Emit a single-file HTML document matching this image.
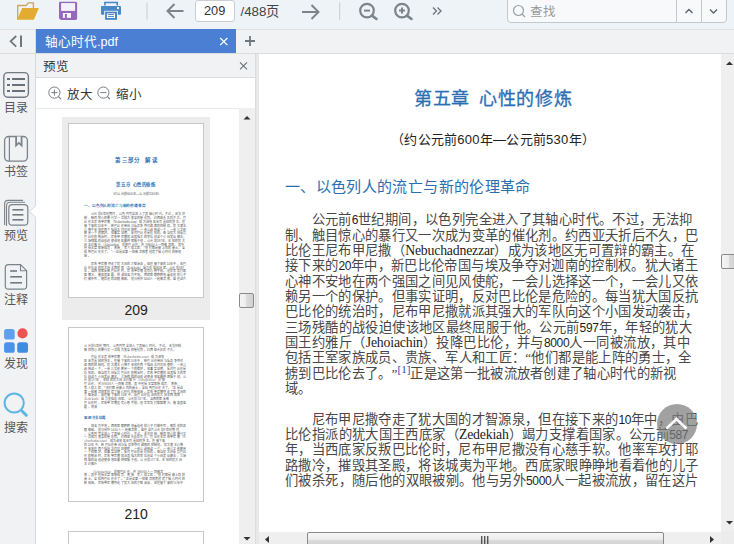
<!DOCTYPE html>
<html lang="zh-CN">
<head>
<meta charset="utf-8">
<style>
*{box-sizing:border-box;margin:0;padding:0}
html,body{width:734px;height:544px;overflow:hidden;background:#fff}
body{position:relative;font-family:"Liberation Sans",sans-serif;color:#333}
.a{position:absolute}
#toolbar{left:0;top:0;width:734px;height:30px;background:#eef3f8;border-bottom:1px solid #dde2e7}
#tabbar{left:0;top:30px;width:734px;height:24px;background:#f1f2f4;border-bottom:1px solid #dadcdf}
#side{left:0;top:54px;width:36px;height:490px;background:#f1f2f4;border-right:1px solid #d6d8db}
#prev{left:36px;top:54px;width:219px;height:490px;background:#fff}
#split{left:255px;top:54px;width:4px;height:490px;background:#e8e8e8;border-left:1px solid #dcdcdc}
#doc{left:259px;top:54px;width:462px;height:478px;background:#fff;overflow:hidden}
.ln{position:absolute;white-space:nowrap;text-spacing-trim:space-all;font-kerning:none;font-family:"Liberation Serif",serif;font-size:13.3px;line-height:16px;color:#484848}
.ln .dg{font-family:"Liberation Sans",sans-serif;font-size:12px;letter-spacing:-0.35px;color:#1c1c1c}
.ln .lt{font-size:13.8px;letter-spacing:-0.2px;color:#1c1c1c}
.tin .ln .dg{letter-spacing:0}
.ln sup{font-size:11px;line-height:11px;color:#2b3fb5;vertical-align:top;position:relative;top:-2px;letter-spacing:0}
.tt{position:absolute;white-space:nowrap;font-size:18px;line-height:20px;color:#2a6fb2;letter-spacing:0.7px;-webkit-text-stroke:0.3px #2a6fb2}
.st{position:absolute;white-space:nowrap;font-size:13px;line-height:16px;color:#222;letter-spacing:0.26px;text-spacing-trim:space-all}
.hd{position:absolute;white-space:nowrap;font-size:15px;line-height:18px;color:#2a6fb2;letter-spacing:0.38px;text-spacing-trim:space-all}
.lbl{position:absolute;font-size:12px;line-height:14px;color:#555;white-space:nowrap}
.sl{position:absolute;font-size:12px;line-height:14px;color:#555;white-space:nowrap;left:3px;width:25.4px;text-align:center}
.thumb{position:absolute;width:136px;height:175px;background:#fff;border:1px solid #c8c8c8;overflow:hidden}
.tin{position:absolute;left:-69px;transform-origin:0 0}
.tin .tt,.tin .hd{font-weight:bold}
.tin .st{color:#555}
.tin .tt{-webkit-text-stroke:0}
.tin .ln{font-size:12px;letter-spacing:1.27px !important;color:#505050}
.tin .ln .dg,.tin .ln .lt{color:#505050}
.sb{position:absolute;background:#efefef}
</style>
</head>
<body>
<!-- toolbar -->
<div id="toolbar" class="a">
  <svg class="a" style="left:0;top:0" width="734" height="29" viewBox="0 0 734 29">
    <path d="M17.7 19.4 V5.5 H26.3 L28.2 2.8 H33.4 V8.4" fill="none" stroke="#c9a55e" stroke-width="1.3" stroke-linejoin="round"/>
    <path d="M17.2 19.7 L22.1 8.1 H38.9 L33.8 19.7 Z" fill="#e2ac33"/>
    <path d="M60 1.8 H75.6 Q77.1 1.8 77.1 3.3 V18.6 Q77.1 20 75.6 20 H60.8 L59 18.2 V2.8 Q59 1.8 60 1.8 Z" fill="#9568bb"/>
    <rect x="61.1" y="3.1" width="14" height="7.8" fill="#f3f2fa"/>
    <rect x="62.9" y="13" width="8.1" height="4.9" fill="#f6f4fb"/>
    <rect x="64.9" y="14" width="2" height="3.9" fill="#9568bb"/>
    <path d="M104.9 5.5 V2.5 H117.2 V5.5" fill="none" stroke="#4a86c5" stroke-width="1.6"/>
    <rect x="101" y="5.9" width="20" height="8.9" rx="0.8" fill="#4a88c8"/>
    <rect x="104.2" y="10.8" width="13.7" height="9.6" fill="#eef3f8"/>
    <rect x="105.1" y="11.7" width="11.9" height="8.1" fill="#4a86c5"/>
    <rect x="106.9" y="13.4" width="8.1" height="4.6" fill="#fff"/>
    <rect x="107.9" y="14" width="6.1" height="0.9" fill="#4a86c5"/>
    <rect x="107.9" y="16" width="6.1" height="0.9" fill="#4a86c5"/>
    <rect x="117" y="7.1" width="2" height="2" fill="#fff"/>
    <rect x="146.5" y="2.5" width="1" height="17" fill="#c9cdd2"/>
    <rect x="339.2" y="2.2" width="1" height="17.4" fill="#c9cdd2"/>
    <path d="M183.5 11 H168 M174.5 4 L167.5 11 L174.5 18" fill="none" stroke="#7c848b" stroke-width="2"/>
    <path d="M302 12 H318 M311.5 5 L318.5 12 L311.5 19" fill="none" stroke="#7c848b" stroke-width="2"/>
    <circle cx="367" cy="10.6" r="6.8" fill="none" stroke="#7c848b" stroke-width="2.2"/>
    <path d="M372 15.6 L376.5 19" stroke="#7c848b" stroke-width="2.6" stroke-linecap="round"/>
    <path d="M364 10.6 H370" stroke="#7c848b" stroke-width="2"/>
    <circle cx="402" cy="10.6" r="6.8" fill="none" stroke="#7c848b" stroke-width="2.2"/>
    <path d="M407 15.6 L411.5 19" stroke="#7c848b" stroke-width="2.6" stroke-linecap="round"/>
    <path d="M399 10.6 H405 M402 7.6 V13.6" stroke="#7c848b" stroke-width="2"/>
    <path d="M433 7.5 L436.5 11 L433 14.5 M437.5 7.5 L441 11 L437.5 14.5" fill="none" stroke="#6c747b" stroke-width="1.3"/>
  </svg>
  <div class="a" style="left:195px;top:0;width:40px;height:22px;background:#fff;border:1px solid #c9ced3;border-radius:3px"></div>
  <div class="lbl" style="left:204px;top:4px;font-size:12.8px;color:#333">209</div>
  <div class="lbl" style="left:240.5px;top:4.5px;font-size:13.3px;color:#444">/488页</div>
  <div class="a" style="left:507px;top:-3px;width:220px;height:26px;background:#f7f9fb;border:1px solid #c3c8cd;border-radius:4px"></div>
  <div class="a" style="left:676px;top:0;width:1px;height:22px;background:#c3c8cd"></div>
  <div class="a" style="left:701px;top:0;width:1px;height:22px;background:#c3c8cd"></div>
  <svg class="a" style="left:0;top:0" width="734" height="29">
    <circle cx="518.5" cy="10.5" r="5" fill="none" stroke="#9aa1a8" stroke-width="1.2"/>
    <path d="M522 14 L525 17" stroke="#9aa1a8" stroke-width="1.3"/>
    <path d="M685.5 13 L689 9.5 L692.5 13" fill="none" stroke="#5a6168" stroke-width="1.3"/>
    <path d="M710 9.5 L713.5 13 L717 9.5" fill="none" stroke="#5a6168" stroke-width="1.3"/>
  </svg>
  <div class="lbl" style="left:530px;top:4.5px;font-size:12.5px;color:#999">查找</div>
</div>

<!-- tab bar -->
<div id="tabbar" class="a">
  <svg class="a" style="left:0;top:0" width="36" height="24">
    <path d="M16.2 6 L10.6 11.3 L16.2 16.6" fill="none" stroke="#6f777e" stroke-width="1.8"/>
    <rect x="20" y="5.5" width="2" height="11.5" fill="#6f777e"/>
  </svg>
  <div class="a" style="left:35px;top:0;width:1px;height:24px;background:#dadcdf"></div>
  <div class="a" style="left:36px;top:-1px;width:200px;height:24px;background:#4a7fd4"></div>
  <div class="lbl" style="left:45px;top:4.8px;font-size:12.6px;color:#fff">轴心时代.pdf</div>
  <svg class="a" style="left:0;top:0" width="734" height="24">
    <path d="M220.2 8 L227.4 15.2 M227.4 8 L220.2 15.2" stroke="#fff" stroke-width="1.2"/>
    <path d="M245 11 H255 M250 6 V16" stroke="#6f777e" stroke-width="1.8"/>
  </svg>
</div>

<!-- left sidebar -->
<div id="side" class="a">
  <svg class="a" style="left:0;top:0" width="36" height="490" viewBox="0 54 36 490">
    <!-- 目录 -->
    <rect x="3.8" y="72.6" width="24.6" height="24.6" rx="4" fill="none" stroke="#737a81" stroke-width="1.4"/>
    <g fill="#6a7178"><rect x="7" y="78" width="3" height="2"/><rect x="12" y="78" width="13" height="2"/>
    <rect x="7" y="84" width="3" height="2"/><rect x="12" y="84" width="13" height="2"/>
    <rect x="7" y="90" width="3" height="2"/><rect x="12" y="90" width="13" height="2"/></g>
    <!-- 书签 -->
    <rect x="4.6" y="136.5" width="22.8" height="24.6" rx="4" fill="none" stroke="#7c838a" stroke-width="1.3"/>
    <rect x="8.8" y="136.5" width="1.2" height="24.6" fill="#7c838a"/>
    <path d="M15.2 136.5 H22.5 V147.5 L18.85 144 L15.2 147.5 Z" fill="#7c838a"/>
    <path d="M17 136.5 H20.7 V143.5 L18.85 141.7 L17 143.5 Z" fill="#f1f2f4"/>
    <!-- 预览 -->
    <path d="M4.6 225 V204 Q4.6 200.4 8.2 200.4 H23" fill="none" stroke="#7c838a" stroke-width="1.1"/>
    <path d="M6.5 226 V206 Q6.5 202.3 10 202.3 H25" fill="none" stroke="#7c838a" stroke-width="1.1"/>
    <rect x="8.8" y="204.6" width="19" height="20.6" rx="3.5" fill="#f1f2f4" stroke="#7c838a" stroke-width="1.2"/>
    <g fill="#727980"><rect x="12.4" y="209" width="11" height="1.6"/><rect x="12.4" y="214" width="11" height="1.6"/><rect x="12.4" y="219" width="11" height="1.6"/></g>
    <!-- 注释 -->
    <path d="M8.5 264.6 H20.5 L26.6 270.7 V286 Q26.6 289.2 23.4 289.2 H8.5 Q5.3 289.2 5.3 286 V267.8 Q5.3 264.6 8.5 264.6 Z" fill="none" stroke="#7c838a" stroke-width="1.2"/>
    <path d="M20.5 264.6 V270.7 H26.6" fill="none" stroke="#7c838a" stroke-width="1.1"/>
    <g fill="#727980"><rect x="10.2" y="270.2" width="6.8" height="1.6"/><rect x="10.2" y="276" width="11.8" height="1.6"/><rect x="10.2" y="282" width="11.8" height="1.6"/></g>
    <!-- 发现 -->
    <rect x="4.1" y="329" width="10.6" height="10.6" rx="2.6" fill="#5e9ff0"/>
    <circle cx="22.5" cy="333.4" r="5.1" fill="#f05252"/>
    <rect x="4.1" y="342.2" width="10.6" height="10.6" rx="2.6" fill="#4a92ea"/>
    <rect x="17.2" y="342.2" width="10.8" height="10.6" rx="2.6" fill="#3f8de2"/>
    <!-- 搜索 -->
    <circle cx="14.2" cy="403" r="9.6" fill="none" stroke="#5cb5e5" stroke-width="2"/>
    <path d="M22.2 411.2 L26.3 415.3" stroke="#5cb5e5" stroke-width="3" stroke-linecap="round"/>
  </svg>
  <div class="sl" style="top:46.5px">目录</div>
  <div class="sl" style="top:110.5px">书签</div>
  <div class="sl" style="top:174.5px">预览</div>
  <div class="sl" style="top:238.5px">注释</div>
  <div class="sl" style="top:302.5px">发现</div>
  <div class="sl" style="top:366.5px">搜索</div>
</div>
<svg class="a" style="left:0;top:0" width="40" height="544">
  <path d="M36 205.6 L29.6 211.6 L36 217.6" fill="#fff" stroke="#d6d8db" stroke-width="1"/>
</svg>

<!-- preview panel -->
<div id="prev" class="a">
  <div class="a" style="left:0;top:0;width:219px;height:24px;background:#f1f2f4;border-bottom:1px solid #d9dbde"></div>
  <div class="lbl" style="left:6.5px;top:5.5px;font-size:12.5px;color:#333">预览</div>
  <svg class="a" style="left:0;top:0" width="219" height="60">
    <path d="M204 8.4 L211 15.4 M211 8.4 L204 15.4" stroke="#6b7278" stroke-width="1.1"/>
    <circle cx="18.4" cy="38.6" r="5.6" fill="none" stroke="#757c83" stroke-width="1"/>
    <path d="M15.4 38.6 H21.4 M18.4 35.6 V41.6" stroke="#757c83" stroke-width="1"/>
    <path d="M22.4 42.6 L25 45.2" stroke="#757c83" stroke-width="1.2"/>
    <circle cx="67.4" cy="38.6" r="5.6" fill="none" stroke="#757c83" stroke-width="1"/>
    <path d="M64.4 38.6 H70.4" stroke="#757c83" stroke-width="1"/>
    <path d="M71.4 42.6 L74 45.2" stroke="#757c83" stroke-width="1.2"/>
  </svg>
  <div class="lbl" style="left:30.5px;top:33.5px;font-size:12.5px;color:#333">放大</div>
  <div class="lbl" style="left:79.5px;top:33.5px;font-size:12.5px;color:#333">缩小</div>
  <div class="a" style="left:0;top:54px;width:219px;height:1px;background:#e9eaec"></div>
</div>
<!-- selected thumb bg -->
<div class="a" style="left:62px;top:117px;width:148px;height:203px;background:#ececec"></div>
<div class="thumb" style="left:68px;top:123px">
  <div class="tin" style="top:-124px;transform:translate(13.77px,159.68px) scale(0.248)">
    <div class="ln" style="left:311.6px;top:212.30px;letter-spacing:0.3827px">公元前<span class="dg">6</span>世纪期间，以色列完全进入了其轴心时代。不过，无法抑</div>
<div class="ln" style="left:285px;top:227.63px;letter-spacing:0.3335px">制、触目惊心的暴行又一次成为变革的催化剂。约西亚夭折后不久，巴</div>
<div class="ln" style="left:285px;top:242.96px;letter-spacing:0.3471px">比伦王尼布甲尼撒（<span class="lt">Nebuchadnezzar</span>）成为该地区无可置辩的霸主。在</div>
<div class="ln" style="left:285px;top:258.29px;letter-spacing:0.3473px">接下来的<span class="dg">20</span>年中，新巴比伦帝国与埃及争夺对迦南的控制权。犹大诸王</div>
<div class="ln" style="left:285px;top:273.62px;letter-spacing:0.3335px">心神不安地在两个强国之间见风使舵，一会儿选择这一个，一会儿又依</div>
<div class="ln" style="left:285px;top:288.95px;letter-spacing:0.3335px">赖另一个的保护。但事实证明，反对巴比伦是危险的。每当犹大国反抗</div>
<div class="ln" style="left:285px;top:304.28px;letter-spacing:0.3374px">巴比伦的统治时，尼布甲尼撒就派其强大的军队向这个小国发动袭击，</div>
<div class="ln" style="left:285px;top:319.61px;letter-spacing:0.3891px">三场残酷的战役迫使该地区最终屈服于他。公元前<span class="dg">597</span>年，年轻的犹大</div>
<div class="ln" style="left:285px;top:334.94px;letter-spacing:0.4605px">国王约雅斤（<span class="lt">Jehoiachin</span>）投降巴比伦，并与<span class="dg">8000</span>人一同被流放，其中</div>
<div class="ln" style="left:285px;top:350.27px;letter-spacing:0.347px">包括王室家族成员、贵族、军人和工匠：“他们都是能上阵的勇士，全</div>
<div class="ln" style="left:285px;top:365.60px;letter-spacing:0.3005px">掳到巴比伦去了。”<sup>[1]</sup>正是这第一批被流放者创建了轴心时代的新视</div>
<div class="ln" style="left:285px;top:380.93px;letter-spacing:0.347px">域。</div>
<div class="ln" style="left:311.6px;top:411.59px;letter-spacing:0.3433px">尼布甲尼撒夺走了犹大国的才智源泉，但在接下来的<span class="dg">10</span>年中，由巴</div>
<div class="ln" style="left:285px;top:426.92px;letter-spacing:0.3788px">比伦指派的犹大国王西底家（<span class="lt">Zedekiah</span>）竭力支撑着国家。公元前<span class="dg">587</span></div>
<div class="ln" style="left:285px;top:442.25px;letter-spacing:0.3272px">年，当西底家反叛巴比伦时，尼布甲尼撒没有心慈手软。他率军攻打耶</div>
<div class="ln" style="left:285px;top:457.58px;letter-spacing:0.347px">路撒冷，摧毁其圣殿，将该城夷为平地。西底家眼睁睁地看着他的儿子</div>
<div class="ln" style="left:285px;top:472.91px;letter-spacing:0.3912px">们被杀死，随后他的双眼被剜。他与另外<span class="dg">5000</span>人一起被流放，留在这片</div>
<div class="tt" style="left:414px;top:89px">第五章</div>
<div class="tt" style="left:479px;top:89px">心性的修炼</div>
<div class="st" style="left:391px;top:132px">（约公元前600年—公元前530年）</div>
<div class="hd" style="left:284.8px;top:177.8px">一、以色列人的流亡与新的伦理革命</div>
    <div class="tt" style="left:409px;top:-8px;font-size:22px;line-height:24px;font-weight:bold;letter-spacing:3.6px">第三部分&nbsp;&nbsp;解读</div>
  </div>
</div>
<div class="lbl" style="left:124.5px;top:303px;font-size:14px;color:#222">209</div>
<div class="thumb" style="left:68px;top:327px">
  <div class="tin" style="top:-328px;transform:translate(13.77px,363.68px) scale(0.248)">
    <div class="ln" style="left:285px;top:-78.97px;letter-spacing:0.347px">公元前6世纪期间，以色列完全进入了其轴心时代。不过，无法抑制、</div>
<div class="ln" style="left:285px;top:-63.64px;letter-spacing:0.347px">触目惊心的暴行又一次成为变革的催化剂。约西亚夭折后不久，</div>
<div class="ln" style="left:311.6px;top:-32.98px;letter-spacing:0.347px">巴比伦王尼布甲尼撒（Nebuchadnezzar）成为该地</div>
<div class="ln" style="left:285px;top:-17.65px;letter-spacing:0.347px">区无可置辩的霸主。在接下来的20年中，新巴比伦帝国与埃及争夺对</div>
<div class="ln" style="left:285px;top:-2.32px;letter-spacing:0.347px">迦南的控制权。犹大诸王心神不安地在两个强国之间见风使舵，一会儿</div>
<div class="ln" style="left:285px;top:13.01px;letter-spacing:0.347px">选择这一个，一会儿又依赖另一个的保护。但事实证明，反对巴比伦是</div>
<div class="ln" style="left:285px;top:28.34px;letter-spacing:0.347px">危险的。每当犹大国反抗巴比伦的统治时，尼布甲尼撒就派其强大的军</div>
<div class="ln" style="left:285px;top:43.67px;letter-spacing:0.347px">队向这个小国发动袭击，三场残酷的战役迫使该地区最终屈服于他。公</div>
<div class="ln" style="left:285px;top:59.00px;letter-spacing:0.347px">元前597年，年轻的犹大国王约雅斤（Jehoiachin）投降</div>
<div class="ln" style="left:285px;top:74.33px;letter-spacing:0.347px">巴比伦，并与8000人一同被流放，其中包括王室家族成员、贵族、</div>
<div class="ln" style="left:285px;top:89.66px;letter-spacing:0.347px">军人和工匠：“他们都是能上阵的勇士，全掳到巴比伦去了。”正是这</div>
<div class="ln" style="left:285px;top:104.99px;letter-spacing:0.347px">第一批被流放者创建了轴心时代的新视域。尼布甲尼撒夺走了犹大国的</div>
<div class="ln" style="left:285px;top:120.32px;letter-spacing:0.347px">才智源泉，但在接下来的10年中，由巴比伦指派的犹大国王西底家（</div>
<div class="ln" style="left:285px;top:135.65px;letter-spacing:0.347px">Zedekiah）竭力支撑着国家。公元前587年，当西底家反叛</div>
<div class="ln" style="left:285px;top:150.98px;letter-spacing:0.347px">巴比伦时，尼布甲尼撒没有心慈手软。他率军攻打耶路撒冷，摧毁其圣</div>
<div class="ln" style="left:285px;top:166.31px;letter-spacing:0.347px">殿，将该</div>
<div class="ln" style="left:311.6px;top:242.96px;letter-spacing:0.347px">城夷为平地。西底家眼睁睁地看着他的儿子们被杀死，随后他的双</div>
<div class="ln" style="left:285px;top:258.29px;letter-spacing:0.347px">眼被剜。他与另外5000人一起被流放，留在这片公元前6世纪期间</div>
<div class="ln" style="left:285px;top:273.62px;letter-spacing:0.347px">，以色列完全进入了其轴心时代。不过，无法抑制、触目惊心的暴行又</div>
<div class="ln" style="left:285px;top:288.95px;letter-spacing:0.347px">一次成为变革的催化剂。约西亚夭折后不久，巴比伦王尼布甲尼撒（N</div>
<div class="ln" style="left:285px;top:304.28px;letter-spacing:0.347px">ebuchadnezzar）成为该地区无可置辩的霸主。在接下来</div>
<div class="ln" style="left:285px;top:319.61px;letter-spacing:0.347px">的20年中，新巴比伦帝国与埃及争夺对迦南的控制权。犹大诸王心神</div>
<div class="ln" style="left:285px;top:334.94px;letter-spacing:0.347px">不安地在两个强国之间见风使舵，一会儿选择这一个，一会儿又依赖另</div>
<div class="ln" style="left:285px;top:350.27px;letter-spacing:0.347px">一个的保护。但事实证明，反对巴比伦是危险的。每当犹大国反抗巴比</div>
<div class="ln" style="left:285px;top:365.60px;letter-spacing:0.347px">伦的统治时，尼布甲尼撒就派其强大的军队向这个小国发动袭击，三场</div>
<div class="ln" style="left:285px;top:380.93px;letter-spacing:0.347px">残酷的战役迫使该地区最终屈服于他。公元前597年，年轻的犹大国</div>
<div class="ln" style="left:285px;top:396.26px;letter-spacing:0.347px">王约雅斤</div>
<div class="ln" style="left:311.6px;top:426.92px;letter-spacing:0.347px">（Jehoiachin）投降巴比伦，并与8000人一同被流</div>
<div class="ln" style="left:285px;top:442.25px;letter-spacing:0.347px">放，其中包括王室家族成员、贵族、军人和工匠：“他们都是能上阵的</div>
<div class="ln" style="left:285px;top:457.58px;letter-spacing:0.347px">勇士，全掳到巴比伦去了。”正是这第一批被流放者创建了轴心时代的</div>
<div class="ln" style="left:285px;top:472.91px;letter-spacing:0.347px">新视域。尼布甲尼撒夺走了犹大国的才智源泉，但在接下来的10年中</div>
<div class="hd" style="left:284.8px;top:210.30px;font-size:14px">驱逐并非结局</div>
  </div>
</div>
<div class="lbl" style="left:124.5px;top:507px;font-size:14px;color:#222">210</div>
<div class="thumb" style="left:68px;top:531px"></div>

<!-- preview scrollbar -->
<div class="sb" style="left:239px;top:108px;width:16px;height:436px"></div>
<svg class="a" style="left:239px;top:108px" width="16" height="436">
  <defs><linearGradient id="gv" x1="0" y1="0" x2="1" y2="0"><stop offset="0" stop-color="#f6f6f6"/><stop offset="0.5" stop-color="#ececec"/><stop offset="0.5" stop-color="#dcdcdc"/><stop offset="1" stop-color="#d0d0d0"/></linearGradient>
  <linearGradient id="gh" x1="0" y1="0" x2="0" y2="1"><stop offset="0" stop-color="#f6f6f6"/><stop offset="0.5" stop-color="#ececec"/><stop offset="0.5" stop-color="#dcdcdc"/><stop offset="1" stop-color="#d0d0d0"/></linearGradient></defs>
  <path d="M4.5 11.5 L8 8 L11.5 11.5 Z" fill="#333"/>
  <rect x="0.5" y="185.5" width="14" height="14" rx="1.5" fill="url(#gv)" stroke="#8a8a8a"/>
  <path d="M4.5 429 L8 432.5 L11.5 429 Z" fill="#333"/>
</svg>
<div id="split" class="a"></div>

<!-- document -->
<div id="doc" class="a">
  <div class="a" style="left:-259px;top:-54px">
  <div class="ln" style="left:311.6px;top:212.30px;letter-spacing:0.3827px">公元前<span class="dg">6</span>世纪期间，以色列完全进入了其轴心时代。不过，无法抑</div>
<div class="ln" style="left:285px;top:227.63px;letter-spacing:0.3335px">制、触目惊心的暴行又一次成为变革的催化剂。约西亚夭折后不久，巴</div>
<div class="ln" style="left:285px;top:242.96px;letter-spacing:0.3471px">比伦王尼布甲尼撒（<span class="lt">Nebuchadnezzar</span>）成为该地区无可置辩的霸主。在</div>
<div class="ln" style="left:285px;top:258.29px;letter-spacing:0.3473px">接下来的<span class="dg">20</span>年中，新巴比伦帝国与埃及争夺对迦南的控制权。犹大诸王</div>
<div class="ln" style="left:285px;top:273.62px;letter-spacing:0.3335px">心神不安地在两个强国之间见风使舵，一会儿选择这一个，一会儿又依</div>
<div class="ln" style="left:285px;top:288.95px;letter-spacing:0.3335px">赖另一个的保护。但事实证明，反对巴比伦是危险的。每当犹大国反抗</div>
<div class="ln" style="left:285px;top:304.28px;letter-spacing:0.3374px">巴比伦的统治时，尼布甲尼撒就派其强大的军队向这个小国发动袭击，</div>
<div class="ln" style="left:285px;top:319.61px;letter-spacing:0.3891px">三场残酷的战役迫使该地区最终屈服于他。公元前<span class="dg">597</span>年，年轻的犹大</div>
<div class="ln" style="left:285px;top:334.94px;letter-spacing:0.4605px">国王约雅斤（<span class="lt">Jehoiachin</span>）投降巴比伦，并与<span class="dg">8000</span>人一同被流放，其中</div>
<div class="ln" style="left:285px;top:350.27px;letter-spacing:0.347px">包括王室家族成员、贵族、军人和工匠：“他们都是能上阵的勇士，全</div>
<div class="ln" style="left:285px;top:365.60px;letter-spacing:0.3005px">掳到巴比伦去了。”<sup>[1]</sup>正是这第一批被流放者创建了轴心时代的新视</div>
<div class="ln" style="left:285px;top:380.93px;letter-spacing:0.347px">域。</div>
<div class="ln" style="left:311.6px;top:411.59px;letter-spacing:0.3433px">尼布甲尼撒夺走了犹大国的才智源泉，但在接下来的<span class="dg">10</span>年中，由巴</div>
<div class="ln" style="left:285px;top:426.92px;letter-spacing:0.3788px">比伦指派的犹大国王西底家（<span class="lt">Zedekiah</span>）竭力支撑着国家。公元前<span class="dg">587</span></div>
<div class="ln" style="left:285px;top:442.25px;letter-spacing:0.3272px">年，当西底家反叛巴比伦时，尼布甲尼撒没有心慈手软。他率军攻打耶</div>
<div class="ln" style="left:285px;top:457.58px;letter-spacing:0.347px">路撒冷，摧毁其圣殿，将该城夷为平地。西底家眼睁睁地看着他的儿子</div>
<div class="ln" style="left:285px;top:472.91px;letter-spacing:0.3912px">们被杀死，随后他的双眼被剜。他与另外<span class="dg">5000</span>人一起被流放，留在这片</div>
<div class="tt" style="left:414px;top:89px">第五章</div>
<div class="tt" style="left:479px;top:89px">心性的修炼</div>
<div class="st" style="left:391px;top:132px">（约公元前600年—公元前530年）</div>
<div class="hd" style="left:284.8px;top:177.8px">一、以色列人的流亡与新的伦理革命</div>
  </div>
  <div class="a" style="left:398px;top:350px;width:40px;height:40px;border-radius:50%;background:rgba(125,125,125,0.72)"></div>
  <svg class="a" style="left:398px;top:350px" width="40" height="40">
    <path d="M9.4 24.5 L19.4 15 L29.4 24.5" fill="none" stroke="#fff" stroke-width="2.6"/>
  </svg>
</div>
<!-- main scrollbars -->
<div class="sb" style="left:721px;top:54px;width:13px;height:477px"></div>
<svg class="a" style="left:721px;top:54px" width="13" height="490">
  <path d="M5 11 L8.5 7.5 L12 11 Z" fill="#333"/>
  <rect x="0.5" y="200.5" width="14" height="14" rx="1.5" fill="url(#gv)" stroke="#8a8a8a"/>
  <path d="M5 467 L8.5 470.5 L12 467 Z" fill="#333"/>
</svg>
<div class="sb" style="left:259px;top:532px;width:462px;height:12px"></div>
<svg class="a" style="left:259px;top:532px" width="475" height="12">
  <path d="M10 4 L6 7.5 L10 11 Z" fill="#333"/>
  <rect x="48.5" y="0.5" width="356" height="14" rx="1.5" fill="url(#gh)" stroke="#8a8a8a"/>
  <g fill="#555"><rect x="222" y="4" width="1.4" height="8"/><rect x="225" y="4" width="1.4" height="8"/><rect x="228" y="4" width="1.4" height="8"/></g>
  <path d="M451 4 L455 7.5 L451 11 Z" fill="#333"/>
</svg>
<div class="sb" style="left:721px;top:531px;width:13px;height:13px;background:#ececec"></div>
</body>
</html>
